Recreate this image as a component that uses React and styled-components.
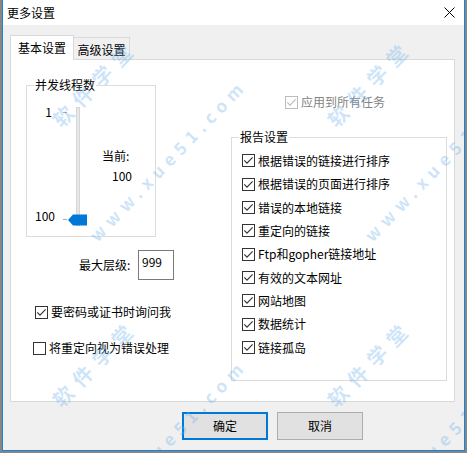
import React from 'react';
import styled, { createGlobalStyle } from 'styled-components';

const GlobalStyle = createGlobalStyle`
  * { box-sizing: border-box; }
  body {
    margin: 0;
    background: #868686;
    font-family: "Noto Sans CJK SC", "Noto Sans", sans-serif;
    font-size: 12px;
    line-height: 16px;
    color: #000;
  }
`;

const Window = styled.div`
  position: relative;
  margin-left: 2px;
  width: 463px;
  height: 451px;
  border: 1px solid #1883d7;
  border-top: none;
  background: #f0f0f0;
  display: flex;
  flex-direction: column;
  overflow: hidden;
`;

const TitleBar = styled.div`
  height: 25px;
  background: #fff;
  display: flex;
  align-items: center;
  justify-content: space-between;
  padding: 0 9px 0 4px;
`;

const Body = styled.div`
  flex: 1;
  padding: 10px 9px 0 7px;
`;

const TabStrip = styled.div`
  display: flex;
  align-items: flex-end;
  height: 24px;
`;

const Tab = styled.div`
  position: relative;
  display: flex;
  align-items: center;
  justify-content: center;
  border: 1px solid #d9d9d9;
  border-bottom: none;
  height: ${p => (p.$active ? '25px' : '22px')};
  width: ${p => (p.$active ? '64px' : '56px')};
  margin-bottom: ${p => (p.$active ? '-1px' : '0')};
  padding-top: ${p => (p.$active ? '0' : '2px')};
  background: ${p => (p.$active ? '#fff' : '#f0f0f0')};
  border-left: ${p => (p.$active ? '1px solid #d9d9d9' : 'none')};
  z-index: ${p => (p.$active ? 1 : 0)};
`;

const Panel = styled.div`
  width: 445px;
  height: 343px;
  border: 1px solid #d9d9d9;
  background: #fff;
  display: flex;
`;

const LeftCol = styled.div`
  width: 200px;
  display: flex;
  flex-direction: column;
  align-items: flex-start;
`;

const RightCol = styled.div`
  flex: 1;
  display: flex;
  flex-direction: column;
  align-items: flex-start;
`;

const Group = styled.div`
  position: relative;
  border: 1px solid #dcdcdc;
  width: ${p => p.$w}px;
  height: ${p => p.$h}px;
  margin: ${p => p.$m};
`;

const Legend = styled.span`
  position: absolute;
  top: -9px;
  left: 7px;
  padding: 0 1px;
  background: #fff;
`;

const ThreadsInner = styled.div`
  display: flex;
  padding: 18px 0 0 9px;
`;

const Scale = styled.div`
  width: 19px;
  height: 120px;
  display: flex;
  flex-direction: column;
  justify-content: space-between;
  align-items: flex-end;
`;

const ScaleLabel = styled.span`
  padding-right: ${p => p.$inset || 0}px;
`;

const Slider = styled.div`
  position: relative;
  width: 24px;
  height: 124px;
  margin-left: 8px;
`;

const Tick = styled.span`
  position: absolute;
  left: 0;
  top: ${p => p.$y}px;
  width: 4px;
  height: 1px;
  background: #a8a8a8;
`;

const Track = styled.div`
  position: absolute;
  left: 13px;
  top: 3px;
  width: 4px;
  height: 119px;
  background: #e7e7e7;
  border: 1px solid #d6d6d6;
`;

const Thumb = styled.svg`
  position: absolute;
  left: 5px;
  top: 110px;
`;

const Current = styled.div`
  margin-left: 15px;
  padding-top: 44px;
  display: flex;
  flex-direction: column;
  gap: 4px;
  span + span { padding-left: 10px; }
`;

const LevelRow = styled.div`
  display: flex;
  align-items: center;
  margin: 13px 0 0 68px;
`;

const LevelLabel = styled.span`
  width: 59px;
`;

const LevelInput = styled.div`
  width: 36px;
  height: 30px;
  border: 1px solid #7a7a7a;
  padding: 3px 0 0 3px;
`;

const CheckRow = styled.label`
  display: flex;
  align-items: center;
  gap: 3px;
  height: ${p => p.$h || 16}px;
  margin: ${p => p.$m || '0'};
  color: ${p => (p.$disabled ? '#838383' : '#000')};
`;

const Box = styled.span`
  width: 13px;
  height: 13px;
  border: 1px solid ${p => (p.$disabled ? '#bcbcbc' : '#333')};
  background: #fff;
  display: flex;
  align-items: center;
  justify-content: center;
  flex: none;
`;

const ReportList = styled.div`
  display: grid;
  grid-auto-rows: 23.33px;
  padding: 11.3px 0 0 10px;
`;

const ButtonRow = styled.div`
  display: flex;
  gap: 9px;
  margin: 10px 0 0 172px;
`;

const Button = styled.div`
  width: 86px;
  height: 28px;
  display: flex;
  align-items: center;
  justify-content: center;
  background: #e1e1e1;
  border: ${p => (p.$default ? '2px solid #0078d7' : '1px solid #adadad')};
`;

const Watermark = styled.div`
  position: absolute;
  inset: 0;
  pointer-events: none;
  z-index: 5;
`;

const Mark = styled.span`
  position: absolute;
  left: ${p => p.$x}px;
  top: ${p => p.$y}px;
  transform: translate(-50%, -50%) rotate(-46deg);
  white-space: nowrap;
  font-weight: bold;
  font-size: ${p => (p.$cn ? 20 : 17)}px;
  letter-spacing: ${p => (p.$cn ? 8 : 6)}px;
  color: rgba(110, 178, 236, 0.34);
`;

const Check = ({ checked, disabled, label, ...rest }) => (
  <CheckRow $disabled={disabled} {...rest}>
    <Box $disabled={disabled}>
      {checked && (
        <svg width="11" height="11" viewBox="0 0 11 11">
          <polyline
            points="1.3,5.4 4,8.2 9.6,2.4"
            fill="none"
            stroke={disabled ? '#bcbcbc' : '#333'}
            strokeWidth="1.15"
          />
        </svg>
      )}
    </Box>
    <span>{label}</span>
  </CheckRow>
);

const reportItems = [
  '根据错误的链接进行排序',
  '根据错误的页面进行排序',
  '错误的本地链接',
  '重定向的链接',
  'Ftp和gopher链接地址',
  '有效的文本网址',
  '网站地图',
  '数据统计',
  '链接孤岛'
];

const marks = [
  { x: 92, y: 83, cn: true, t: '软件学堂' },
  { x: 92, y: 363, cn: true, t: '软件学堂' },
  { x: 367, y: 83, cn: true, t: '软件学堂' },
  { x: 367, y: 363, cn: true, t: '软件学堂' },
  { x: 165, y: 160, t: 'www.xue51.com' },
  { x: 165, y: 440, t: 'www.xue51.com' },
  { x: 440, y: 160, t: 'www.xue51.com' },
  { x: 440, y: 440, t: 'www.xue51.com' }
];

const App = () => (
  <>
    <GlobalStyle />
    <Window>
      <TitleBar>
        <span>更多设置</span>
        <svg width="11" height="11" viewBox="0 0 11 11">
          <path d="M0.5 0.5 L10.5 10.5 M10.5 0.5 L0.5 10.5" stroke="#000" strokeWidth="1" />
        </svg>
      </TitleBar>
      <Body>
        <TabStrip>
          <Tab $active>基本设置</Tab>
          <Tab>高级设置</Tab>
        </TabStrip>
        <Panel>
          <LeftCol>
            <Group $w={130} $h={152} $m="25px 0 0 15px">
              <Legend>并发线程数</Legend>
              <ThreadsInner>
                <Scale>
                  <ScaleLabel $inset={3}>1</ScaleLabel>
                  <ScaleLabel>100</ScaleLabel>
                </Scale>
                <Slider>
                  <Tick $y={8} />
                  <Tick $y={115} />
                  <Track />
                  <Thumb width="19" height="12" viewBox="0 0 19 12">
                    <polygon points="0,6 5,0.5 19,0.5 19,11.5 5,11.5" fill="#0078d7" />
                  </Thumb>
                </Slider>
                <Current>
                  <span>当前:</span>
                  <span>100</span>
                </Current>
              </ThreadsInner>
            </Group>
            <LevelRow>
              <LevelLabel>最大层级:</LevelLabel>
              <LevelInput>999</LevelInput>
            </LevelRow>
            <Check checked label="要密码或证书时询问我" $m="24px 0 0 24px" />
            <Check label="将重定向视为错误处理" $m="20px 0 0 22px" />
          </LeftCol>
          <RightCol>
            <Check checked disabled label="应用到所有任务" $m="34px 0 0 74px" />
            <Group $w={216} $h={244} $m="27px 0 0 20px">
              <Legend>报告设置</Legend>
              <ReportList>
                {reportItems.map(item => (
                  <Check key={item} checked label={item} $h={23.33} />
                ))}
              </ReportList>
            </Group>
          </RightCol>
        </Panel>
        <ButtonRow>
          <Button $default>确定</Button>
          <Button>取消</Button>
        </ButtonRow>
      </Body>
      <Watermark>
        {marks.map((m, i) => (
          <Mark key={i} $x={m.x} $y={m.y} $cn={m.cn}>
            {m.t}
          </Mark>
        ))}
      </Watermark>
    </Window>
  </>
);

export default App;
